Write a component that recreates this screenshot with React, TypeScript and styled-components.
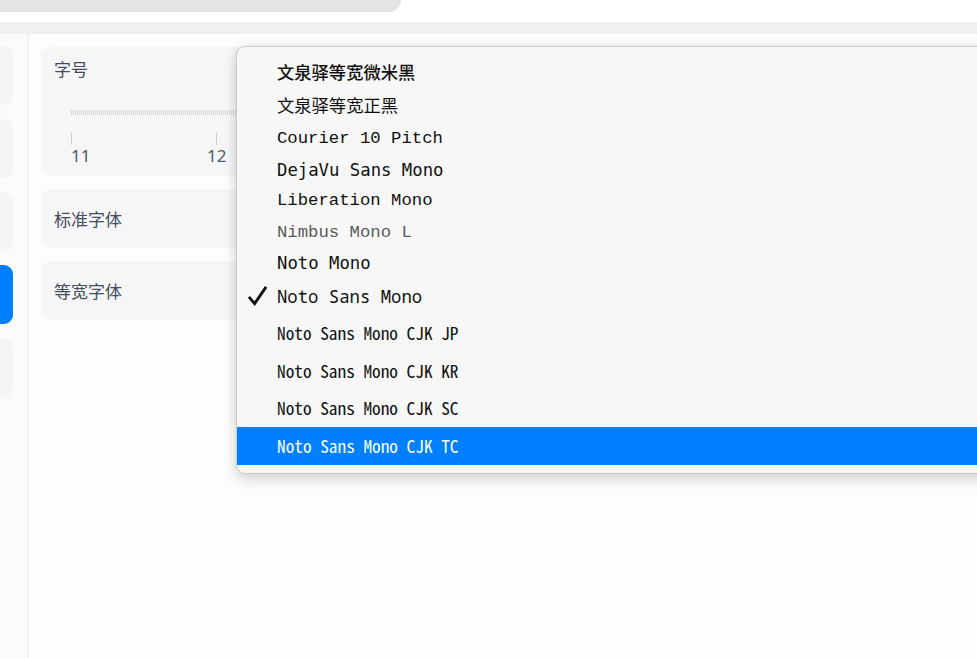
import React from "react";
import styled, { createGlobalStyle } from "styled-components";

const GlobalStyle = createGlobalStyle`
  html, body {
    margin: 0;
    padding: 0;
    background: #ffffff;
    overflow: hidden;
  }
  body {
    font-family: "Noto Sans", "Noto Sans CJK SC", sans-serif;
  }
`;

type FontItem = {
  name: string;
  family: string;
  h: number;
  shift: number;
  weight?: number;
  tone?: string;
};

// heights and small baseline nudges per row, read off the screenshot
const fonts: FontItem[] = [
  { name: "文泉驿等宽微米黑", family: '"Noto Sans CJK SC", sans-serif', h: 34, shift: -1, weight: 500 },
  { name: "文泉驿等宽正黑", family: '"Noto Sans CJK SC", sans-serif', h: 33, shift: -1 },
  { name: "Courier 10 Pitch", family: '"Liberation Mono", monospace', h: 32, shift: 0 },
  { name: "DejaVu Sans Mono", family: '"DejaVu Sans Mono", monospace', h: 31, shift: 0 },
  { name: "Liberation Mono", family: '"Liberation Mono", monospace', h: 31, shift: 0 },
  { name: "Nimbus Mono L", family: '"Liberation Mono", monospace', h: 31, shift: 1, tone: "#5a5a5a" },
  { name: "Noto Mono", family: '"DejaVu Sans Mono", monospace', h: 32, shift: 0 },
  { name: "Noto Sans Mono", family: '"Noto Sans Mono", "DejaVu Sans Mono", monospace', h: 36, shift: -1 },
  { name: "Noto Sans Mono CJK JP", family: '"Noto Sans Mono CJK JP", "Noto Sans CJK JP", monospace', h: 37, shift: -1 },
  { name: "Noto Sans Mono CJK KR", family: '"Noto Sans Mono CJK KR", "Noto Sans CJK KR", monospace', h: 38, shift: -1 },
  { name: "Noto Sans Mono CJK SC", family: '"Noto Sans Mono CJK SC", "Noto Sans CJK SC", monospace', h: 37, shift: -1 },
  { name: "Noto Sans Mono CJK TC", family: '"Noto Sans Mono CJK TC", "Noto Sans CJK TC", monospace', h: 38, shift: -1 },
];

const checkedName = "Noto Sans Mono";
const activeName = "Noto Sans Mono CJK TC";

const App = () => {
  return (
    <Page>
      <GlobalStyle />
      <Header>
        <SearchBar />
      </Header>
      <TabStrip />
      <Body>
        <Sidebar>
          <NavTile />
          <NavTile />
          <NavTile />
          <NavTile active />
          <NavTile />
        </Sidebar>
        <Main>
          <SliderCard>
            <CardLabel>字号</CardLabel>
            <Track />
            <Ticks>
              <Tick>
                <TickMark />
                <TickNum>11</TickNum>
              </Tick>
              <Tick>
                <TickMark />
                <TickNum $centered>12</TickNum>
              </Tick>
            </Ticks>
          </SliderCard>
          <RowCard>
            <CardLabel>标准字体</CardLabel>
          </RowCard>
          <RowCard>
            <CardLabel>等宽字体</CardLabel>
          </RowCard>
        </Main>
      </Body>

      <Menu>
        {fonts.map((f) => (
          <MenuItem
            key={f.name}
            $h={f.h}
            $family={f.family}
            $weight={f.weight || 400}
            $tone={f.tone}
            $active={f.name === activeName}
          >
            {f.name === checkedName && (
              <Check viewBox="0 0 22 22">
                <path d="M2 12.5 L8 19.5 L20 2" />
              </Check>
            )}
            <ItemText $shift={f.shift}>{f.name}</ItemText>
          </MenuItem>
        ))}
      </Menu>
    </Page>
  );
};

const Page = styled.div`
  position: relative;
  width: 977px;
  height: 658px;
  overflow: hidden;
  background: #ffffff;
`;

const Header = styled.div`
  height: 22px;
  background: #ffffff;
`;

const SearchBar = styled.div`
  width: 401px;
  height: 12px;
  background: #e4e4e4;
  border-bottom-right-radius: 12px;
`;

const TabStrip = styled.div`
  height: 12px;
  background: #f0f0f0;
`;

const Body = styled.div`
  display: flex;
  height: 624px;
`;

const Sidebar = styled.div`
  width: 27px;
  flex: none;
  background: #fbfbfb;
  border-right: 2px solid #f2f2f2;
  padding-top: 12px;
  display: flex;
  flex-direction: column;
  gap: 14px;
  overflow: hidden;
`;

const NavTile = styled.div<{ active?: boolean }>`
  width: 53px;
  height: 59px;
  margin-left: -40px;
  border-radius: 9px;
  flex: none;
  background: ${(p) => (p.active ? "#0080ff" : "#f5f5f5")};
`;

const Main = styled.div`
  flex: 1;
  padding: 13px 16px 0 12px;
  display: flex;
  flex-direction: column;
  gap: 13px;
  background: #fdfdfd;
`;

const SliderCard = styled.div`
  height: 129px;
  box-sizing: border-box;
  background: #f6f6f6;
  border-radius: 9px;
  padding: 10px 13px 0 13px;
`;

const RowCard = styled.div`
  height: 59px;
  box-sizing: border-box;
  background: #f6f6f6;
  border-radius: 9px;
  padding: 0 13px;
  display: flex;
  align-items: center;
`;

const CardLabel = styled.div`
  font-family: "Noto Sans CJK SC", "Noto Sans", sans-serif;
  font-size: 17px;
  line-height: 24px;
  color: #434d5e;
`;

const Track = styled.div`
  margin: 29px 0 0 17px;
  height: 5px;
  background: repeating-linear-gradient(90deg, #d9d9d9 0 1px, transparent 1px 2px);
`;

const Ticks = styled.div`
  display: flex;
  gap: 118px;
  margin: 18px 0 0 17px;
`;

const Tick = styled.div`
  display: flex;
  flex-direction: column;
  align-items: flex-start;
  width: 27px;
`;

const TickMark = styled.div`
  width: 1px;
  height: 12px;
  background: #cfcfcf;
`;

const TickNum = styled.div<{ $centered?: boolean }>`
  font-family: "Noto Sans", sans-serif;
  font-size: 17px;
  line-height: 20px;
  margin-top: 1px;
  color: #4b5a70;
  transform: ${(p) => (p.$centered ? "translateX(-9px)" : "none")};
`;

const Menu = styled.div`
  position: absolute;
  left: 236px;
  top: 46px;
  width: 780px;
  box-sizing: border-box;
  padding: 8px 0;
  background: #f7f7f7;
  border: 1px solid #cacaca;
  border-radius: 9px;
  box-shadow: 0 6px 14px rgba(0, 0, 0, 0.14), 0 0 10px rgba(0, 0, 0, 0.07);
`;

const MenuItem = styled.div<{
  $h: number;
  $family: string;
  $weight: number;
  $tone?: string;
  $active: boolean;
}>`
  position: relative;
  height: ${(p) => p.$h}px;
  display: flex;
  align-items: center;
  padding-left: 40px;
  font-family: ${(p) => p.$family};
  font-weight: ${(p) => p.$weight};
  font-size: 17.3px;
  white-space: nowrap;
  color: ${(p) => (p.$active ? "#ffffff" : p.$tone || "#111111")};
  background: ${(p) => (p.$active ? "#0080ff" : "transparent")};
`;

const ItemText = styled.span<{ $shift: number }>`
  position: relative;
  top: ${(p) => p.$shift}px;
`;

const Check = styled.svg`
  position: absolute;
  left: 10px;
  top: 50%;
  width: 21px;
  height: 21px;
  margin-top: -12px;
  fill: none;
  stroke: #111111;
  stroke-width: 3;
  stroke-linecap: butt;
  stroke-linejoin: miter;
`;

export default App;
